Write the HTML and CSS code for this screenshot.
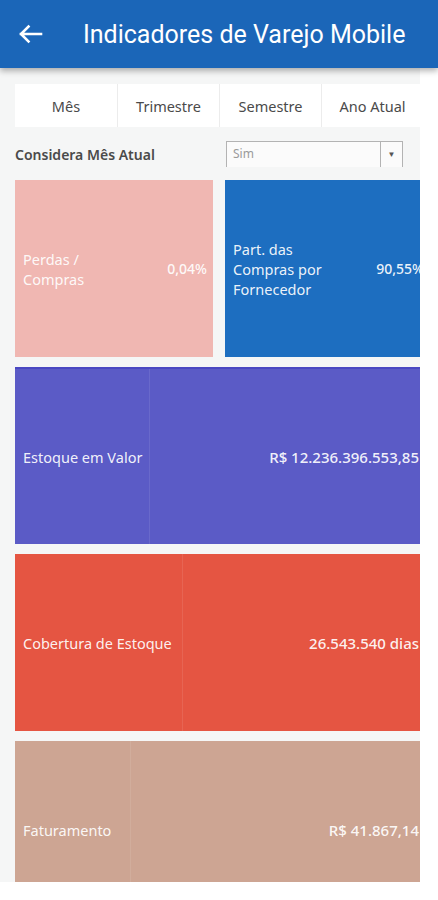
FILE: index.html
```html
<!DOCTYPE html>
<html lang="pt-BR">
<head>
  <meta charset="UTF-8" />
  <meta name="viewport" content="width=device-width, initial-scale=1.0"/>
  <title>Indicadores de Varejo Mobile</title>
  <link rel="stylesheet" href="styles.css">
</head>
<body>
  <header class="appbar">
    <svg class="back" width="26" height="20" viewBox="0 0 26 20">
      <path d="M24 10H4M11.5 2.5L4 10l7.5 7.5" fill="none" stroke="#fff" stroke-width="2.6" stroke-linecap="square"/>
    </svg>
    <h1>Indicadores de Varejo Mobile</h1>
  </header>

  <main class="panel">
    <!-- PERIOD TABS -->
    <nav class="tabs">
      <div class="tab">Mês</div>
      <div class="tab">Trimestre</div>
      <div class="tab">Semestre</div>
      <div class="tab">Ano Atual</div>
    </nav>

    <!-- FILTER -->
    <div class="filter">
      <span class="filter-label">Considera Mês Atual</span>
      <div class="select">
        <span class="select-value">Sim</span>
        <span class="select-btn">&#9660;</span>
      </div>
    </div>

    <!-- TILES -->
    <div class="tiles">
      <div class="tile-row">
        <div class="tile tile-half pink">
          <div class="tile-label narrow">Perdas / Compras</div>
          <div class="tile-value">0,04%</div>
        </div>
        <div class="tile tile-half blue">
          <div class="tile-label narrow">Part. das Compras por Fornecedor</div>
          <div class="tile-value">90,55%</div>
        </div>
      </div>

      <div class="tile purple">
        <div class="tile-label split" style="width: 135px">Estoque em Valor</div>
        <div class="tile-value">R$ 12.236.396.553,85</div>
      </div>

      <div class="tile red">
        <div class="tile-label split" style="width: 168px">Cobertura de Estoque</div>
        <div class="tile-value">26.543.540 dias</div>
      </div>

      <div class="tile tan">
        <div class="tile-label split" style="width: 116px">Faturamento</div>
        <div class="tile-value">R$ 41.867,14</div>
      </div>
    </div>
  </main>
</body>
</html>
```

FILE: styles.css
```css
html, body {
  margin: 0;
  padding: 0;
  background: #ffffff;
  font-family: 'Noto Sans', sans-serif;
}

.appbar {
  position: relative;
  z-index: 10;
  height: 68px;
  display: flex;
  align-items: center;
  background: #1b66b8;
  box-shadow: 0 3px 6px rgba(0, 0, 0, 0.3);
}

.appbar .back {
  margin-left: 17px;
  flex: none;
}

.appbar h1 {
  margin: 0 0 0 40px;
  font-family: Roboto, sans-serif;
  font-size: 25px;
  font-weight: 400;
  color: #ffffff;
  white-space: nowrap;
}

.panel {
  width: 420px;
  height: 814px;
  box-sizing: border-box;
  padding: 16px 0 0 15px;
  background: #f5f6f6;
  overflow: hidden;
}

/* TABS */
.tabs {
  display: flex;
  width: 408px;
  height: 43px;
  background: #ffffff;
}

.tab {
  flex: 0 0 102px;
  display: flex;
  align-items: center;
  justify-content: center;
  font-size: 14.5px;
  color: #4a4a4a;
  border-left: 1px solid #ececec;
  box-sizing: border-box;
}

.tab:first-child {
  border-left: none;
}

/* FILTER */
.filter {
  display: flex;
  align-items: center;
  margin-top: 14px;
  height: 26px;
}

.filter-label {
  width: 211px;
  font-size: 14px;
  font-weight: 600;
  color: #4a4a4a;
}

.select {
  display: flex;
  width: 177px;
  height: 26px;
  box-sizing: border-box;
  border: 1px solid #b3b3b3;
  border-bottom: none;
  background: #fbfbfb;
}

.select-value {
  flex: 1;
  padding-left: 6px;
  font-size: 12px;
  line-height: 24px;
  color: #9a9a9a;
}

.select-btn {
  width: 21px;
  border-left: 1px solid #b3b3b3;
  text-align: center;
  font-size: 8px;
  line-height: 24px;
  color: #555555;
}

/* TILES */
.tiles {
  display: flex;
  flex-direction: column;
  gap: 10px;
  margin-top: 13px;
}

.tile-row {
  display: flex;
  gap: 12px;
}

.tile {
  display: flex;
  align-items: center;
  flex: none;
  width: 410px;
  height: 177px;
  box-sizing: border-box;
  overflow: hidden;
  color: rgba(255, 255, 255, 0.93);
  font-size: 14.5px;
  line-height: 20px;
}

.tile-half {
  width: 198px;
}

.tile-half + .tile-half {
  width: 205px;
}

.tile-label {
  flex: none;
  box-sizing: border-box;
  padding-left: 8px;
}

.tile-label.narrow {
  width: 102px;
}

.tile-label.split {
  align-self: stretch;
  display: flex;
  align-items: center;
  border-right: 1px solid rgba(255, 255, 255, 0.09);
}

.tile-value {
  flex: 1;
  text-align: right;
  padding-right: 6px;
  font-size: 15px;
  font-weight: 500;
  white-space: nowrap;
}

.tile-half .tile-value {
  font-size: 14px;
}

.pink { background: #f0b7b2; }
.blue { background: #1d6ec0; }
.purple { background: #5b5bc6; border-top: 2px solid #4a48c2; }
.red { background: #e55542; }
.tan { background: #cda593; }
```
